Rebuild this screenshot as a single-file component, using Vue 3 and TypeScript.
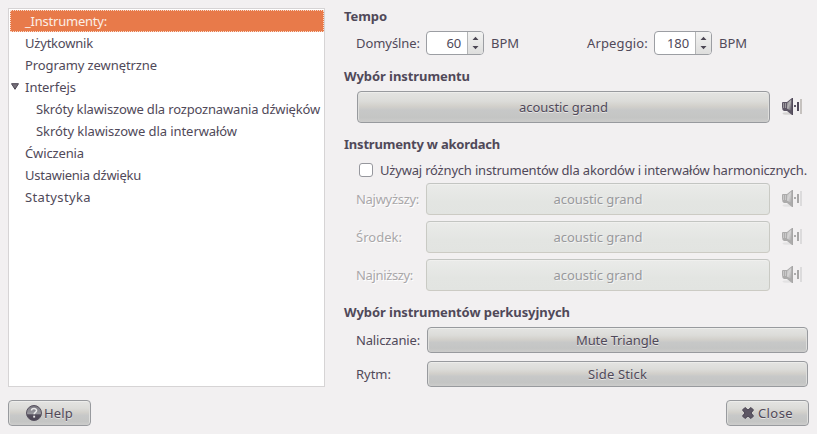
<script setup lang="ts">
import { ref } from 'vue'

interface TreeItem {
  label: string
  width: number
  child?: boolean
  expanded?: boolean
}

interface Choice {
  label: string
  labelWidth: number
  value: string
  valueWidth: number
}

const tree: TreeItem[] = [
  { label: '_Instrumenty:', width: 82 },
  { label: 'Użytkownik', width: 68 },
  { label: 'Programy zewnętrzne', width: 132 },
  { label: 'Interfejs', width: 51, expanded: true },
  { label: 'Skróty klawiszowe dla rozpoznawania dźwięków', width: 284, child: true },
  { label: 'Skróty klawiszowe dla interwałów', width: 201, child: true },
  { label: 'Ćwiczenia', width: 59 },
  { label: 'Ustawienia dźwięku', width: 116 },
  { label: 'Statystyka', width: 66 },
]
const selected = ref(0)

const tempos = [
  { label: 'Domyślne:', width: 64, value: 60, valueWidth: 14.5 },
  { label: 'Arpeggio:', width: 61, value: 180, valueWidth: 22 },
]

const chords: Choice[] = [
  { label: 'Najwyższy:', labelWidth: 63, value: 'acoustic grand', valueWidth: 89 },
  { label: 'Środek:', labelWidth: 46, value: 'acoustic grand', valueWidth: 89 },
  { label: 'Najniższy:', labelWidth: 57, value: 'acoustic grand', valueWidth: 89 },
]

const percussion: Choice[] = [
  { label: 'Naliczanie:', labelWidth: 64, value: 'Mute Triangle', valueWidth: 83 },
  { label: 'Rytm:', labelWidth: 35, value: 'Side Stick', valueWidth: 59 },
]

// Spreads the letters of a label over the given width in pixels.
const vFit = {
  mounted(el: HTMLElement, binding: { value: number }) {
    const count = (el.textContent ?? '').length
    const gap = (binding.value - el.getBoundingClientRect().width) / count
    el.style.letterSpacing = `${gap.toFixed(3)}px`
  },
}
</script>

<template>
  <div class="dialog">
    <div class="main">
      <ul class="tree">
        <li
          v-for="(item, i) in tree"
          :key="item.label"
          class="node"
          :class="{ selected: i === selected, child: item.child }"
          @click="selected = i"
        >
          <svg v-if="item.expanded" class="expander" viewBox="0 0 8 7">
            <path d="M.5 .7h7L4 6.3z" fill="#77717b" stroke="#4b4653" />
          </svg>
          <span v-fit="item.width" class="t">{{ item.label }}</span>
        </li>
      </ul>

      <div class="page">
        <h2><span v-fit="43" class="t">Tempo</span></h2>
        <div class="row tempo">
          <div v-for="t in tempos" :key="t.label" class="tempo-item">
            <span v-fit="t.width" class="t">{{ t.label }}</span>
            <div class="spin">
              <div class="value"><span v-fit="t.valueWidth" class="t">{{ t.value }}</span></div>
              <div class="steps">
                <svg viewBox="0 0 7 14">
                  <path d="M.5 4h6L3.5 .8zM.5 10h6L3.5 13.2z" fill="#4b4653" />
                </svg>
              </div>
            </div>
            <span v-fit="28" class="t">BPM</span>
          </div>
        </div>

        <h2 class="h-instrument"><span v-fit="126" class="t">Wybór instrumentu</span></h2>
        <div class="row single">
          <button class="btn tall"><span v-fit="89" class="t">acoustic grand</span></button>
          <svg class="speaker" viewBox="0 0 20 19">
            <use href="#speaker-shape" />
          </svg>
        </div>

        <h2 class="h-chords"><span v-fit="156" class="t">Instrumenty w akordach</span></h2>
        <label class="check">
          <i class="box"></i>
          <span v-fit="427" class="t">Używaj różnych instrumentów dla akordów i interwałów harmonicznych.</span>
        </label>
        <div class="chords">
          <div v-for="c in chords" :key="c.label" class="row disabled">
            <div class="label"><span v-fit="c.labelWidth" class="t">{{ c.label }}</span></div>
            <button class="btn tall" disabled><span v-fit="c.valueWidth" class="t">{{ c.value }}</span></button>
            <svg class="speaker" viewBox="0 0 20 19">
              <use href="#speaker-shape" />
            </svg>
          </div>
        </div>

        <h2 class="h-percussion"><span v-fit="226" class="t">Wybór instrumentów perkusyjnych</span></h2>
        <div class="percussion">
          <div v-for="p in percussion" :key="p.label" class="row">
            <div class="label wide"><span v-fit="p.labelWidth" class="t">{{ p.label }}</span></div>
            <button class="btn"><span v-fit="p.valueWidth" class="t">{{ p.value }}</span></button>
          </div>
        </div>
      </div>
    </div>

    <div class="actions">
      <button class="btn action">
        <svg class="help-icon" viewBox="0 0 16 16">
          <defs>
            <linearGradient id="help-fill" x1="0" y1="0" x2="0" y2="1">
              <stop offset="0" stop-color="#77757e" />
              <stop offset=".55" stop-color="#9a999f" />
              <stop offset=".62" stop-color="#544e5c" />
              <stop offset="1" stop-color="#4b4454" />
            </linearGradient>
          </defs>
          <circle cx="8" cy="8" r="7.5" fill="url(#help-fill)" stroke="#57515f" />
          <path d="M5.5 5.6C5.5 2.9 10.6 2.8 10.6 5.6C10.6 7.4 8.1 7.3 8.1 9.3" fill="none" stroke="#e9e9e9" stroke-width="1.5" />
          <rect x="7.2" y="10.7" width="1.9" height="1.9" fill="#e9e9e9" />
        </svg>
        <span v-fit="29" class="t">Help</span>
      </button>
      <button class="btn action close">
        <svg class="close-icon" viewBox="0 0 12 12">
          <path
            d="M3 .5L6 3L9 .5L11.5 3L9 6L11.5 9L9 11.5L6 9L3 11.5L.5 9L3 6L.5 3z"
            fill="#5d5764"
            stroke="#4b4553"
            stroke-linejoin="round"
          />
        </svg>
        <span v-fit="35" class="t">Close</span>
      </button>
    </div>

    <svg class="defs" width="0" height="0">
      <defs>
        <linearGradient id="cone" x1="0" y1="0" x2="1" y2="1">
          <stop offset="0" stop-color="#77727c" />
          <stop offset=".45" stop-color="#b5b4b5" />
          <stop offset="1" stop-color="#57505f" />
        </linearGradient>
        <g id="speaker-shape">
          <ellipse cx="5.5" cy="15.5" rx="5" ry="1.3" fill="#d5d3d2" />
          <path d="M0 5Q0 4 1 4H5L10 0H11V17H10L5 13H2Q0 12 0 9z" fill="#5c5564" />
          <path d="M5 5L9.3 1.8V13L5 10.5z" fill="url(#cone)" />
          <path d="M1.6 5v5M3.6 5v5" stroke="#aaa8aa" stroke-width=".9" />
          <path d="M10.5 0v17" stroke="#514a5a" />
          <path d="M12 7h2v2h-2z" fill="#5c5564" />
          <path d="M15 4h2v9h-2z" fill="#514a5a" />
          <path d="M18 1h2v15h-2z" fill="#c6c2bf" />
        </g>
      </defs>
    </svg>
  </div>
</template>

<style>
body {
  background: #f2f0f1;
}
</style>

<style scoped>
.dialog {
  box-sizing: border-box;
  width: 817px;
  height: 434px;
  padding: 8px;
  background: #f2f0f1;
  color: #504959;
  font: 13px/20px "Noto Sans", "Open Sans", sans-serif;
  overflow: hidden;
}
.t {
  display: inline-block;
  white-space: nowrap;
}
.main {
  display: flex;
  gap: 19px;
  height: 379px;
}
.tree {
  box-sizing: border-box;
  width: 317px;
  margin: 0;
  padding: 1px 0 0 1px;
  border: 1px solid #d6d4d5;
  background: #fff;
  list-style: none;
}
.node {
  display: flex;
  align-items: center;
  box-sizing: border-box;
  height: 22px;
  padding-left: 15px;
}
.node.child {
  padding-left: 26px;
}
.node.selected {
  padding-left: 14px;
  border: 1px dotted #f9dccd;
  background: #e87a4a;
  color: #fbeee7;
}
.expander {
  width: 8px;
  height: 7px;
  margin: -2px 6px 0 -14px;
}
.page {
  width: 465px;
}
h2 {
  height: 20px;
  margin: -2px 0 0;
  font-size: 13px;
  line-height: 20px;
  font-weight: 700;
}
.row {
  display: flex;
  align-items: center;
  padding-left: 12px;
}
.tempo {
  height: 24px;
  margin-top: 5px;
}
.tempo-item {
  display: flex;
  flex: none;
  align-items: center;
  width: 231px;
}
.tempo-item:last-child {
  width: auto;
}
.spin {
  display: flex;
  box-sizing: border-box;
  width: 58px;
  height: 24px;
  margin: 0 7px 0 6px;
  border: 1px solid #9c9ea3;
  border-radius: 4px;
  background: #fff;
  overflow: hidden;
}
.value {
  flex: 1;
  padding-right: 6px;
  line-height: 22px;
  text-align: right;
}
.steps {
  display: flex;
  align-items: center;
  justify-content: center;
  width: 15px;
  border-left: 1px solid #b4b5b6;
  background: linear-gradient(#f3f3f2, #dededd);
}
.steps svg {
  width: 7px;
  height: 14px;
}
.h-instrument {
  margin-top: 11px;
}
.single {
  margin-top: 5px;
  padding-left: 13px;
}
.btn {
  display: flex;
  flex: 1;
  align-items: center;
  justify-content: center;
  box-sizing: border-box;
  height: 26px;
  padding: 0;
  border: 1px solid #989a9e;
  border-radius: 4px;
  background: linear-gradient(#e4e4e2 0, #dcdcd9 30%, #d2d0cb 48%, #c7c8c8 60%, #c4c5c4 85%, #cccccb);
  box-shadow: inset 0 1px #ededeb, inset 1px 0 #dededc, inset -1px 0 #dededc;
  color: #504959;
  font: inherit;
  text-shadow: 0 1px #e6e5e4;
}
.btn.tall {
  height: 32px;
}
.speaker {
  width: 20px;
  height: 19px;
  margin: 1px 7px 0 12px;
}
.h-chords {
  margin-top: 11px;
}
.check {
  display: flex;
  align-items: center;
  height: 20px;
  margin-top: 6px;
  padding-left: 15px;
}
.box {
  flex: none;
  box-sizing: border-box;
  width: 14px;
  height: 14px;
  margin-right: 7px;
  border: 1px solid #96979d;
  border-radius: 3px;
  background: #fff;
}
.chords {
  display: flex;
  flex-direction: column;
  gap: 6px;
  margin-top: 3px;
}
.label {
  width: 70px;
}
.label.wide {
  width: 71px;
}
.disabled {
  color: #a9a7a9;
  text-shadow: 1px 1px #fff;
}
.disabled .btn {
  border-color: #c3c5c2 #c9cac4 #cccbc4;
  background: linear-gradient(#eaebe9, #e3e5e2 60%, #e2e4e1);
  box-shadow: inset 0 1px #f0f0ee;
  color: #98999c;
  text-shadow: 1px 1px #f3f3f2;
}
.disabled .speaker {
  opacity: .45;
  filter: grayscale(1);
}
.h-percussion {
  margin-top: 11px;
}
.percussion {
  display: flex;
  flex-direction: column;
  gap: 8px;
  width: 464px;
  margin-top: 5px;
}
.actions {
  display: flex;
  justify-content: space-between;
  margin-top: 13px;
}
.btn.action {
  flex: none;
  gap: 2px;
  width: 83px;
}
.btn.close {
  gap: 4px;
}
.help-icon {
  width: 16px;
  height: 16px;
}
.close-icon {
  width: 12px;
  height: 12px;
}
.defs {
  display: block;
}
</style>
